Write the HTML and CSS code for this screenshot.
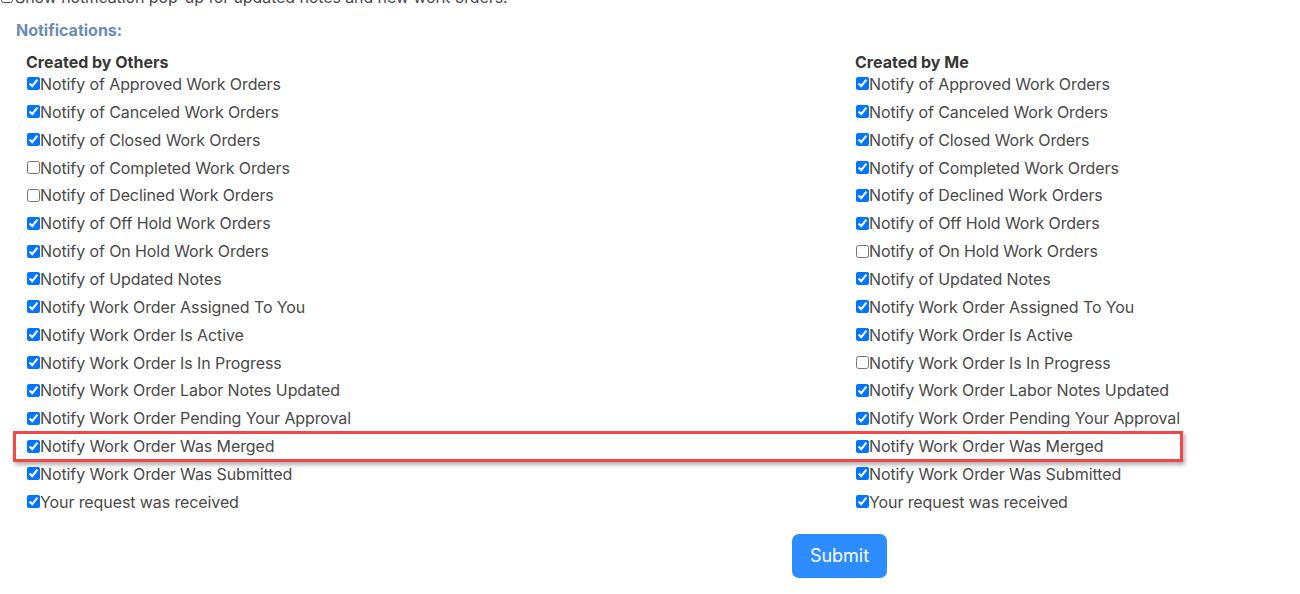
FILE: index.html
```html
<!DOCTYPE html>
<html lang="en">
<head>
    <meta charset="UTF-8">
    <title>Notification Settings</title>
    <link rel="stylesheet" href="styles.css">
</head>
<body>
    <div class="page">
        <label class="popup-row"><input type="checkbox">Show notification pop-up for updated notes and new work orders.</label>

        <h3 class="section-title">Notifications:</h3>

        <div class="columns">
            <div class="col">
                <h4>Created by Others</h4>
                <label class="opt"><input type="checkbox" checked>Notify of Approved Work Orders</label>
                <label class="opt"><input type="checkbox" checked>Notify of Canceled Work Orders</label>
                <label class="opt"><input type="checkbox" checked>Notify of Closed Work Orders</label>
                <label class="opt"><input type="checkbox">Notify of Completed Work Orders</label>
                <label class="opt"><input type="checkbox">Notify of Declined Work Orders</label>
                <label class="opt"><input type="checkbox" checked>Notify of Off Hold Work Orders</label>
                <label class="opt"><input type="checkbox" checked>Notify of On Hold Work Orders</label>
                <label class="opt"><input type="checkbox" checked>Notify of Updated Notes</label>
                <label class="opt"><input type="checkbox" checked>Notify Work Order Assigned To You</label>
                <label class="opt"><input type="checkbox" checked>Notify Work Order Is Active</label>
                <label class="opt"><input type="checkbox" checked>Notify Work Order Is In Progress</label>
                <label class="opt"><input type="checkbox" checked>Notify Work Order Labor Notes Updated</label>
                <label class="opt"><input type="checkbox" checked>Notify Work Order Pending Your Approval</label>
                <label class="opt"><input type="checkbox" checked>Notify Work Order Was Merged</label>
                <label class="opt"><input type="checkbox" checked>Notify Work Order Was Submitted</label>
                <label class="opt"><input type="checkbox" checked>Your request was received</label>
            </div>
            <div class="col">
                <h4>Created by Me</h4>
                <label class="opt"><input type="checkbox" checked>Notify of Approved Work Orders</label>
                <label class="opt"><input type="checkbox" checked>Notify of Canceled Work Orders</label>
                <label class="opt"><input type="checkbox" checked>Notify of Closed Work Orders</label>
                <label class="opt"><input type="checkbox" checked>Notify of Completed Work Orders</label>
                <label class="opt"><input type="checkbox" checked>Notify of Declined Work Orders</label>
                <label class="opt"><input type="checkbox" checked>Notify of Off Hold Work Orders</label>
                <label class="opt"><input type="checkbox">Notify of On Hold Work Orders</label>
                <label class="opt"><input type="checkbox" checked>Notify of Updated Notes</label>
                <label class="opt"><input type="checkbox" checked>Notify Work Order Assigned To You</label>
                <label class="opt"><input type="checkbox" checked>Notify Work Order Is Active</label>
                <label class="opt"><input type="checkbox">Notify Work Order Is In Progress</label>
                <label class="opt"><input type="checkbox" checked>Notify Work Order Labor Notes Updated</label>
                <label class="opt"><input type="checkbox" checked>Notify Work Order Pending Your Approval</label>
                <label class="opt"><input type="checkbox" checked>Notify Work Order Was Merged</label>
                <label class="opt"><input type="checkbox" checked>Notify Work Order Was Submitted</label>
                <label class="opt"><input type="checkbox" checked>Your request was received</label>
            </div>
            <!-- highlight around the "Merged" row -->
            <div class="highlight"></div>
        </div>

        <div class="actions">
            <button type="submit" class="btn-submit">Submit</button>
        </div>
    </div>
</body>
</html>
```

FILE: styles.css
```css
body { margin: 0; font-family: Inter, "Noto Sans", sans-serif; color: #4a4a4a; background: #fff; }
.page { position: relative; }
.popup-row { display: flex; align-items: center; height: 20px; margin-top: -13px; font-size: 16px; color: #4a4a4a; letter-spacing: -0.1px; }
.popup-row input { margin: 0 2px 0 1px; width: 12px; height: 12px; }
.section-title { margin: 11px 0 0 16px; font-size: 16px; font-weight: 700; color: #6a8db8; line-height: 24px; }
.columns { position: relative; display: grid; grid-template-columns: 829px 1fr; padding-left: 26px; margin-top: 12px; }
.col h4 { margin: 0; font-size: 16px; font-weight: 700; color: #383838; line-height: 16px; }
.opt { display: flex; align-items: center; height: 27.87px; font-size: 16px; letter-spacing: -0.1px; }
.opt input { margin: 0 0 0 1px; width: 13px; height: 13px; }
.highlight { position: absolute; left: 13px; top: 377px; width: 1164px; height: 25px; border: 3px solid #f44646; box-shadow: 2px 3px 4px rgba(0,0,0,0.3); pointer-events: none; }
.actions { padding: 18px 0 0 792px; }
.btn-submit { width: 95px; height: 44px; border: none; border-radius: 7px; background: #2d8cff; color: #fff; font-family: Inter, "Noto Sans", sans-serif; font-size: 18px; cursor: pointer; }
```
